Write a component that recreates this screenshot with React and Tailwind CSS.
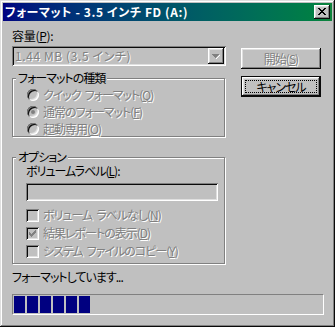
import React from "react";

const dis = "text-[#808080] [text-shadow:1px_1px_0_#fff]";
const raised =
  "shadow-[inset_-1px_-1px_#0a0a0a,inset_1px_1px_#fff,inset_-2px_-2px_#808080,inset_2px_2px_#dfdfdf]";
const sunken =
  "shadow-[inset_1px_1px_#808080,inset_-1px_-1px_#fff,inset_2px_2px_#0a0a0a,inset_-2px_-2px_#dfdfdf]";

function U({ children }) {
  return <span className="underline underline-offset-[1px]">{children}</span>;
}

function Sp() {
  return <span className="inline-block w-[4px]"> </span>;
}

function Radio({ checked, children }) {
  return (
    <div className="h-[17px] flex items-center gap-[4px]">
      <div
        className={`w-[12px] h-[12px] shrink-0 rounded-full bg-[#c0c0c0] flex items-center justify-center shadow-[inset_1px_1px_#808080,inset_-1px_-1px_#fff,inset_2px_2px_#0a0a0a,inset_-2px_-2px_#dfdfdf]`}
      >
        {checked && <div className="w-[4px] h-[4px] rounded-full bg-[#808080]" />}
      </div>
      <span className={dis}>{children}</span>
    </div>
  );
}

function Check({ checked, children }) {
  return (
    <div className="h-[18px] flex items-center gap-[4px]">
      <div className={`w-[13px] h-[13px] shrink-0 bg-[#c0c0c0] flex items-center justify-center ${sunken}`}>
        {checked && (
          <svg width="7" height="7" viewBox="0 0 7 7" shapeRendering="crispEdges">
            <path
              fill="#808080"
              d="M6 0h1v3h-1zM5 1h1v3h-1zM4 2h1v3h-1zM3 3h1v3h-1zM2 4h1v3h-1zM1 3h1v3h-1zM0 2h1v3h-1z"
            />
          </svg>
        )}
      </div>
      <span className={dis}>{children}</span>
    </div>
  );
}

export default function App() {
  return (
    <div
      className={`w-[335px] h-[327px] bg-[#c0c0c0] p-[3px] overflow-hidden text-[12px] leading-[12px] tracking-[-1px] text-black font-['Noto_Sans_CJK_JP','Noto_Sans',sans-serif] [font-feature-settings:'palt'] shadow-[inset_-1px_-1px_#0a0a0a,inset_1px_1px_#dfdfdf,inset_-2px_-2px_#808080,inset_2px_2px_#fff]`}
    >
      {/* Title bar */}
      <div className="h-[18px] flex items-center justify-between pl-[2px] pr-[2px] bg-gradient-to-r from-[#000080] to-[#10843c]">
        <span className="text-white font-bold text-[12px] leading-[12px] tracking-[0.6px]">
          フォーマット - 3.5 インチ FD (A:)
        </span>
        <div className={`w-[16px] h-[14px] bg-[#c0c0c0] flex items-center justify-center pb-[1px] ${raised}`}>
          <svg width="8" height="7" viewBox="0 0 8 7" shapeRendering="crispEdges">
            <path
              fill="#000"
              d="M0 0h2v1h-2zM6 0h2v1h-2zM1 1h2v1h-2zM5 1h2v1h-2zM2 2h4v1h-4zM3 3h2v1h-2zM2 4h4v1h-4zM1 5h2v1h-2zM5 5h2v1h-2zM0 6h2v1h-2zM6 6h2v1h-2z"
            />
          </svg>
        </div>
      </div>

      {/* Body */}
      <div className="flex pl-[9px]">
        {/* Left column */}
        <div className="w-[214px] flex flex-col">
          <div className="mt-[9px] h-[12px] tracking-[-0.3px]">
            容量(<U>P</U>):
          </div>
          <div className={`mt-[4px] h-[20px] flex items-center p-[2px] bg-[#c0c0c0] ${sunken}`}>
            <span className={`flex-1 pl-[1px] tracking-[0.6px] ${dis}`}>1.44 MB (3.5 インチ)</span>
            <div className={`w-[16px] h-[16px] bg-[#c0c0c0] flex items-center justify-center ${raised}`}>
              <svg width="8" height="5" viewBox="0 0 8 5" shapeRendering="crispEdges">
                <path fill="#fff" d="M4 4h1v1h-1zM5 3h1v1h-1zM6 2h1v1h-1zM7 1h1v1h-1z" />
                <path fill="#808080" d="M0 0h7v1h-7zM1 1h5v1h-5zM2 2h3v1h-3zM3 3h1v1h-1z" />
              </svg>
            </div>
          </div>

          {/* Group 1 */}
          <div className="mt-[12px] h-[59px] w-[213px] flex flex-col border border-[#808080] shadow-[inset_1px_1px_#fff,1px_1px_#fff]">
            <div className="-mt-[7px] ml-[3px] self-start px-[2px] h-[12px] bg-[#c0c0c0]">
              フォーマットの種類
            </div>
            <div className="mt-[2px] pl-[14px] flex flex-col">
              <Radio>
                クイック<Sp />フォーマット(<U>Q</U>)
              </Radio>
              <Radio checked>
                通常のフォーマット(<U>F</U>)
              </Radio>
              <Radio>
                起動専用(<U>O</U>)
              </Radio>
            </div>
          </div>

          {/* Group 2 */}
          <div className="mt-[20px] h-[107px] w-[213px] flex flex-col border border-[#808080] shadow-[inset_1px_1px_#fff,1px_1px_#fff]">
            <div className="-mt-[7px] ml-[3px] self-start px-[2px] h-[12px] bg-[#c0c0c0]">
              オプション
            </div>
            <div className="pl-[13px] flex flex-col">
              <div className="mt-[2px] h-[12px]">
                ボリュームラベル(<U>L</U>):
              </div>
              <div className={`mt-[6px] h-[18px] w-[192px] bg-[#c0c0c0] ${sunken}`} />
              <div className="mt-[5px] flex flex-col">
                <Check>
                  ボリューム<Sp />ラベルなし(<U>N</U>)
                </Check>
                <Check checked>
                  結果レポートの表示(<U>D</U>)
                </Check>
                <Check>
                  システム<Sp />ファイルのコピー(<U>Y</U>)
                </Check>
              </div>
            </div>
          </div>
        </div>

        {/* Right column */}
        <div className="ml-[15px] w-[80px] flex flex-col">
          <div className={`mt-[27px] h-[21px] flex items-center justify-center bg-[#c0c0c0] ${raised}`}>
            <span className={dis}>
              開始(<U>S</U>)
            </span>
          </div>
          <div className="mt-[7px] h-[21px] border border-[#0a0a0a] p-[3px] bg-[#c0c0c0] shadow-[inset_-1px_-1px_#0a0a0a,inset_1px_1px_#fff,inset_-2px_-2px_#808080,inset_2px_2px_#dfdfdf]">
            <div className="h-full w-full border border-dotted border-black flex items-center justify-center">
              キャンセル
            </div>
          </div>
        </div>
      </div>

      {/* Status */}
      <div className="pl-[9px] flex flex-col">
        <div className="mt-[7px] h-[12px]">フォーマットしています...</div>
        <div className="mt-[11px] h-[21px] w-[312px] p-[1px] flex gap-[2px] border border-t-[#808080] border-l-[#808080] border-b-white border-r-white">
          {[0, 1, 2, 3, 4, 5].map((i) => (
            <div key={i} className="w-[11px] h-full bg-[#000080]" />
          ))}
        </div>
      </div>
    </div>
  );
}
